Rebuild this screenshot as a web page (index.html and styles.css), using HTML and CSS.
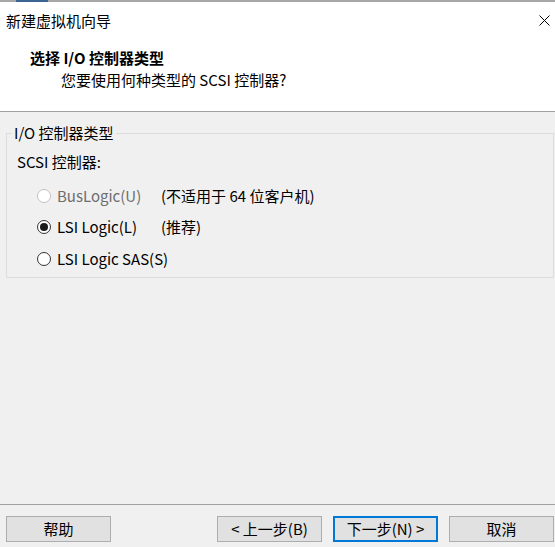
FILE: index.html
```html
<!DOCTYPE html>
<html lang="zh-CN">
<head>
<meta charset="utf-8">
<title>新建虚拟机向导</title>
<link rel="stylesheet" href="styles.css">
</head>
<body>
<div class="topbar"></div>
<header class="header">
  <div class="titlebar">
    <span class="wintitle">新建虚拟机向导</span>
    <svg class="close" width="11" height="11" viewBox="0 0 11 11"><path d="M0.5 0.5 L10.5 10.5 M10.5 0.5 L0.5 10.5" stroke="#000" stroke-width="1" fill="none"/></svg>
  </div>
  <div class="head-title">选择 I/O 控制器类型</div>
  <div class="head-sub">您要使用何种类型的 SCSI 控制器?</div>
</header>
<main class="content">
  <fieldset class="group">
    <legend class="group-label">I/O 控制器类型</legend>
    <div class="field-label">SCSI 控制器:</div>
    <div class="options">
      <div class="opt disabled"><span class="radio"></span><span class="opt-text">BusLogic(U)</span><span class="note">(不适用于 64 位客户机)</span></div>
      <div class="opt"><span class="radio checked"></span><span class="opt-text">LSI Logic(L)</span><span class="note">(推荐)</span></div>
      <div class="opt"><span class="radio"></span><span class="opt-text">LSI Logic SAS(S)</span><span class="note"></span></div>
    </div>
  </fieldset>
</main>
<footer class="footer">
  <button class="btn">帮助</button>
  <div class="spacer"></div>
  <button class="btn">&lt; 上一步(B)</button>
  <button class="btn default">下一步(N) &gt;</button>
  <button class="btn">取消</button>
</footer>
</body>
</html>
```
FILE: styles.css
```css
* { box-sizing: border-box; }
html, body { margin: 0; padding: 0; }
body {
  width: 555px;
  height: 547px;
  overflow: hidden;
  display: flex;
  flex-direction: column;
  background: #f0f0f0;
  font-family: "Noto Sans CJK SC", sans-serif;
  font-size: 15px;
  line-height: 20px;
  color: #000;
}
.topbar {
  height: 2px;
  flex: none;
  background: linear-gradient(to right, #a8a8a8 16px, #3d6591 16px, #3d6591 48px, #a8a8a8 48px);
}
.header {
  flex: none;
  height: 110px;
  background: #fff;
  border-bottom: 1px solid #a0a0a0;
}
.titlebar {
  height: 38px;
  display: flex;
  align-items: center;
  justify-content: space-between;
  padding: 0 5px 0 6px;
}
.wintitle { font-size: 15px; }
.close { display: block; margin-top: -1px; }
.head-title {
  margin-top: 8px;
  padding-left: 30px;
  font-weight: bold;
}
.head-sub {
  margin-top: 2px;
  padding-left: 61px;
}
.content {
  flex: 1;
  padding: 11px 1px 0 6px;
}
.group {
  margin: 0;
  padding: 9px 0 2px 10px;
  border: 1px solid #dcdcdc;
  min-width: 0;
}
.group-label {
  margin-left: -5px;
  padding: 0 2px;
}
.field-label { height: 20px; }
.options {
  margin-top: 8px;
  margin-left: 20px;
}
.opt {
  height: 31.5px;
  display: grid;
  grid-template-columns: 14px 110px auto;
  column-gap: 0;
  align-items: center;
}
.opt-text { padding-left: 6px; white-space: nowrap; }
.note { white-space: nowrap; }
.radio {
  width: 14px;
  height: 14px;
  border: 1px solid #333;
  border-radius: 50%;
  background: #fff;
  display: flex;
  align-items: center;
  justify-content: center;
}
.radio.checked::after {
  content: "";
  width: 8px;
  height: 8px;
  border-radius: 50%;
  background: #1a1a1a;
}
.opt.disabled .radio { border-color: #c2c2c2; }
.opt.disabled .opt-text { color: #6d6d6d; }
.footer {
  flex: none;
  height: 43px;
  border-top: 1px solid #a0a0a0;
  padding: 11px 1px 0 6px;
  display: flex;
  align-items: flex-start;
  gap: 11px;
}
.spacer { flex: 1; }
.btn {
  width: 105px;
  height: 26px;
  margin: 0;
  padding: 0;
  border: 1px solid #adadad;
  background: #e1e1e1;
  font-family: "Noto Sans CJK SC", sans-serif;
  font-size: 15px;
  line-height: 20px;
  color: #000;
}
.btn.default { border: 2px solid #0078d7; }
```
